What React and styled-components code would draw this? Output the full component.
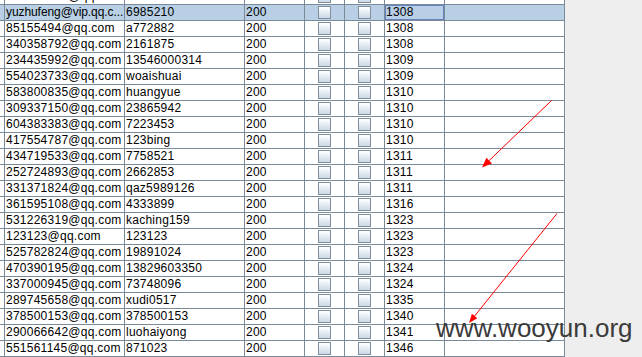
import React from 'react';
import styled, { createGlobalStyle } from 'styled-components';

const Global = createGlobalStyle`
  html, body { margin: 0; padding: 0; background: #eeeeee; }
  body { width: 642px; height: 357px; overflow: hidden; }
`;

const Screen = styled.div`
  position: relative;
  width: 642px;
  height: 357px;
  overflow: hidden;
  background: #eeeeee;
  font-family: "Liberation Sans", Arial, sans-serif;
`;

const Viewport = styled.div`
  height: 357px;
  overflow: hidden;
`;

const Table = styled.div`
  width: 565px;
  margin-top: -11px;
  background: #ffffff;
`;

const Row = styled.div`
  display: grid;
  grid-template-columns: 5px 120px 120px 60px 40px 40px 60px 120px;
  height: 16px;
  background: ${(p) => (p.$selected ? '#b8cfe5' : '#ffffff')};
`;

const Cell = styled.div`
  box-sizing: border-box;
  height: 16px;
  border-right: 1px solid #7a8a99;
  border-bottom: 1px solid #7a8a99;
  padding-left: 1px;
  font-size: 12px;
  line-height: 15px;
  letter-spacing: ${(p) => (p.$tight ? '-0.08px' : '0.25px')};
  color: #000000;
  white-space: nowrap;
  overflow: hidden;
  ${(p) => p.$focus && 'box-shadow: inset 0 0 0 1px #6382bf;'}
`;

const CheckCell = styled(Cell)`
  display: flex;
  align-items: center;
  justify-content: center;
  padding: 0;
`;

const Check = styled.span`
  display: block;
  width: 13px;
  height: 13px;
  box-sizing: border-box;
  border: 1px solid #7f8e9d;
  background: linear-gradient(to bottom, #ffffff 0%, #eef3f8 35%, #cad8e7 100%);
`;

const Overlay = styled.svg`
  position: absolute;
  left: 0;
  top: 0;
  pointer-events: none;
`;

const Watermark = styled.div`
  position: absolute;
  left: 436px;
  top: 315px;
  font-family: "Liberation Sans", Arial, sans-serif;
  font-size: 26px;
  line-height: 26px;
  color: #3b3b3b;
  white-space: nowrap;
`;

const rows = [
  ['287676705@qq.com', '6648264944', '217', '1307'],
  ['yuzhufeng@vip.qq.c...', '6985210', '200', '1308'],
  ['85155494@qq.com', 'a772882', '200', '1308'],
  ['340358792@qq.com', '2161875', '200', '1308'],
  ['234435992@qq.com', '13546000314', '200', '1309'],
  ['554023733@qq.com', 'woaishuai', '200', '1309'],
  ['583800835@qq.com', 'huangyue', '200', '1310'],
  ['309337150@qq.com', '23865942', '200', '1310'],
  ['604383383@qq.com', '7223453', '200', '1310'],
  ['417554787@qq.com', '123bing', '200', '1310'],
  ['434719533@qq.com', '7758521', '200', '1311'],
  ['252724893@qq.com', '2662853', '200', '1311'],
  ['331371824@qq.com', 'qaz5989126', '200', '1311'],
  ['361595108@qq.com', '4333899', '200', '1316'],
  ['531226319@qq.com', 'kaching159', '200', '1323'],
  ['123123@qq.com', '123123', '200', '1323'],
  ['525782824@qq.com', '19891024', '200', '1323'],
  ['470390195@qq.com', '13829603350', '200', '1324'],
  ['337000945@qq.com', '73748096', '200', '1324'],
  ['289745658@qq.com', 'xudi0517', '200', '1335'],
  ['378500153@qq.com', '378500153', '200', '1340'],
  ['290066642@qq.com', 'luohaiyong', '200', '1341'],
  ['551561145@qq.com', '871023', '200', '1346'],
];

function Arrow({ x1, y1, x2, y2, len = 10, half = 4 }) {
  const dx = x2 - x1;
  const dy = y2 - y1;
  const d = Math.hypot(dx, dy);
  const ux = dx / d;
  const uy = dy / d;
  const bx = x2 - ux * len;
  const by = y2 - uy * len;
  const px = -uy * half;
  const py = ux * half;
  return (
    <g>
      <line x1={x1} y1={y1} x2={bx} y2={by} stroke="#ff0000" strokeWidth="1" />
      <polygon
        points={`${x2},${y2} ${bx + px},${by + py} ${bx - px},${by - py}`}
        fill="#ff0000"
      />
    </g>
  );
}

export default function App() {
  return (
    <Screen>
      <Global />
      <Viewport>
        <Table>
          {rows.map((r, i) => {
            const selected = i === 1;
            return (
              <Row key={i} $selected={selected}>
                <Cell />
                <Cell $tight={r[0].endsWith('...')}>{r[0]}</Cell>
                <Cell>{r[1]}</Cell>
                <Cell>{r[2]}</Cell>
                <CheckCell>
                  <Check />
                </CheckCell>
                <CheckCell>
                  <Check />
                </CheckCell>
                <Cell $focus={selected}>{r[3]}</Cell>
                <Cell />
              </Row>
            );
          })}
        </Table>
      </Viewport>
      <Overlay width="642" height="357" viewBox="0 0 642 357">
        <Arrow x1={551.5} y1={100.5} x2={482} y2={167.5} len={10} half={4} />
        <Arrow x1={557} y1={213.5} x2={469} y2={323} len={9} half={3.5} />
      </Overlay>
      <Watermark>www.wooyun.org</Watermark>
    </Screen>
  );
}
